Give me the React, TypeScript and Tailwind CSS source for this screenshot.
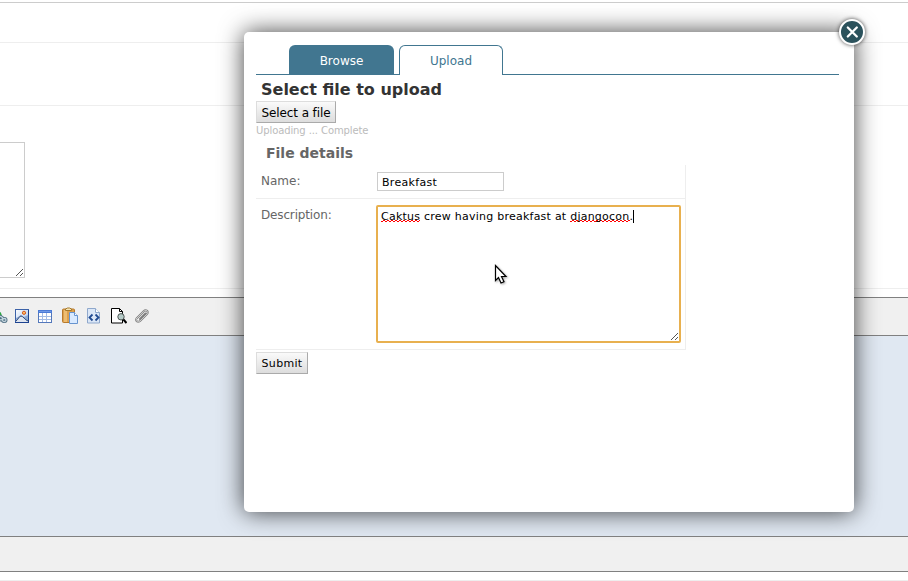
import React from "react";

function LinkIcon() {
  return (
    <svg width="16" height="16" viewBox="0 0 16 16" className="shrink-0">
      <path d="M0 1h5l4 4 1 5-4 3H0z" fill="#2c7f7a" />
      <path d="M5 2l4 3 1 4-3 1-3-3z" fill="#2fae3c" />
      <g fill="none" stroke="#4f6f82" strokeWidth="3">
        <rect x="6" y="8.500" width="4.500" height="3" rx="1.500" transform="rotate(20 8 10)" />
        <rect x="10.500" y="10.500" width="3.500" height="3" rx="1.500" />
      </g>
      <g fill="none" stroke="#c5d5df" strokeWidth="1.300">
        <rect x="6" y="8.500" width="4.500" height="3" rx="1.500" transform="rotate(20 8 10)" />
        <rect x="10.500" y="10.500" width="3.500" height="3" rx="1.500" />
      </g>
    </svg>
  );
}

function ImageIcon() {
  return (
    <svg width="16" height="16" viewBox="0 0 16 16" className="shrink-0">
      <defs>
        <linearGradient id="sky" x2="1" y2="1">
          <stop offset="0" stopColor="#fff" />
          <stop offset="1" stopColor="#a6c3ee" />
        </linearGradient>
      </defs>
      <rect x="1.500" y="1.500" width="13" height="13" fill="url(#sky)" stroke="#3c62a8" />
      <path d="M2 10l2-1 3-2 3 2 4-2v7H2z" fill="#8ea9d2" />
      <path d="M2 13c2-1 3-5 5-5s4 4 7 5v1H2z" fill="#dfe5ef" />
      <path d="M2 13c2-1 3-5 5-5s4 4 7 5" fill="none" stroke="#2c4a7e" />
      <path d="M1 14.500h14M14.500 2v13" stroke="#1d4390" />
      <circle cx="10" cy="4.800" r="1.600" fill="#ffc163" stroke="#d5541b" />
    </svg>
  );
}

function TableIcon() {
  return (
    <svg width="16" height="16" viewBox="0 0 16 16" className="shrink-0">
      <rect x="1.500" y="2.500" width="13" height="12" fill="#fff" stroke="#5478bb" />
      <path d="M1 2h14v3H1z" fill="#4a7ad6" />
      <path d="M2 3h12v1H2z" fill="#6f99e6" />
      <path d="M2 8.500h12M2 11.500h12M5.500 5v9M9.500 5v9" stroke="#a3bce5" />
    </svg>
  );
}

function PasteIcon() {
  return (
    <svg width="18" height="17" viewBox="0 0 18 17" className="shrink-0">
      <rect x="1.500" y="2" width="12" height="13.500" rx="1" fill="#dca04d" stroke="#b87a2c" />
      <path d="M3 3h3v12H3z" fill="#edbd72" />
      <path d="M4.500 3.500V2l2-1h2l2 1v1.500z" fill="#f5e5b7" stroke="#a47829" />
      <path d="M8.500 5.500h5l3 3v8h-8z" fill="#d9eaff" stroke="#6794cf" />
      <path d="M13.500 5.500v3h3" fill="#fff" stroke="#6794cf" />
    </svg>
  );
}

function SourceIcon() {
  return (
    <svg width="16" height="17" viewBox="0 0 16 17" className="shrink-0">
      <path d="M2.500 1.500h8l4 4v10.500h-12z" fill="#dbe7f7" stroke="#8fa8cc" />
      <path d="M10.500 1.500v4h4" fill="#fff" stroke="#8fa8cc" />
      <path d="M7.500 7.500l-3 3 3 3M10.500 7.500l3 3-3 3" fill="none" stroke="#204a91" strokeWidth="1.800" />
    </svg>
  );
}

function PreviewIcon() {
  return (
    <svg width="17" height="17" viewBox="0 0 17 17" className="shrink-0">
      <path d="M1.500 1.500h8l3 3v11.500h-11z" fill="#fff" stroke="#000" />
      <path d="M9.500 1.500v3h3" fill="none" stroke="#000" />
      <path d="M13 12l3.500 4" stroke="#000" strokeWidth="2" />
      <circle cx="11" cy="9.800" r="3.200" fill="#b6cbc8" stroke="#4c5553" />
    </svg>
  );
}

function ClipIcon() {
  return (
    <svg width="16" height="16" viewBox="0 0 16 16" className="shrink-0" fill="none" strokeLinecap="round" strokeLinejoin="round">
      <path d="M11.500 5.500L6 11M2.500 10.500l7-7c2.500-2.500 6 0 3.500 2.500L6 13c-2.500 2-5-.5-3.500-2.500z" stroke="#808080" strokeWidth="2" />
      <path d="M2.500 10.500l7-7c2.500-2.500 6 0 3.500 2.500L6 13c-2.500 2-5-.5-3.500-2.500z" stroke="#d2d2d2" strokeWidth=".9" />
    </svg>
  );
}

function ResizeGrip() {
  return (
    <svg width="9" height="9" viewBox="0 0 9 9" className="shrink-0" shapeRendering="crispEdges">
      <path d="M1 8L8 1M5 8l3-3" stroke="#555" />
    </svg>
  );
}

function Misspelled({ children }: { children: React.ReactNode }) {
  return (
    <span className="bg-[repeating-conic-gradient(#f00_0_25%,transparent_0_50%)] bg-[length:4px_2px] bg-[position:left_bottom_1px] bg-repeat-x">
      {children}
    </span>
  );
}

function EditorPage() {
  return (
    <div className="flex h-[581px] flex-col bg-white">
      <div className="h-[3px] shrink-0 border-b border-[#ccc]" />
      <div className="h-10 shrink-0 border-b border-[#eee]" />
      <div className="h-[63px] shrink-0 border-b border-[#eee]" />
      <div className="h-[183px] shrink-0 border-b border-[#eee] pt-9">
        <div className="flex h-[136px] w-[25px] items-end justify-end border border-l-0 border-[#ccc]">
          <ResizeGrip />
        </div>
      </div>
      <div className="h-2 shrink-0" />
      <div className="flex h-[39px] shrink-0 items-center border-y border-[#808080] bg-[#f0f0f0] pb-[2px]">
        <div className="-ml-2 flex items-center">
          <LinkIcon />
          <span className="w-1.5" />
          <ImageIcon />
          <span className="w-[7px]" />
          <TableIcon />
          <span className="w-2" />
          <PasteIcon />
          <span className="w-[6px]" />
          <SourceIcon />
          <span className="w-[9px]" />
          <PreviewIcon />
          <span className="w-[7px]" />
          <ClipIcon />
        </div>
      </div>
      <div className="h-[200px] shrink-0 bg-[#e0e8f2]" />
      <div className="h-9 shrink-0 border-y border-[#808080] bg-[#f0f0f0]" />
      <div className="h-[9px] shrink-0 border-b border-[#eee]" />
    </div>
  );
}

function FormButton({ children, className }: { children: React.ReactNode; className: string }) {
  return (
    <button
      className={
        "flex items-center justify-center whitespace-nowrap border border-t-[#ddd] border-l-[#ddd] border-r-[#aaa] border-b-[#aaa] bg-linear-to-b from-[#fafafa] to-[#ddd] text-black " +
        className
      }
    >
      {children}
    </button>
  );
}

function UploadDialog() {
  return (
    <div className="absolute top-8 left-[244px] h-[480px] w-[610px] rounded-[5px] bg-white pt-[13px] pl-3 shadow-[0_0_25px_rgba(0,0,0,0.75)]">
      <button className="absolute -top-[14px] left-[594px]">
        <svg width="28" height="28" viewBox="0 0 28 28" className="drop-shadow-[0_0_2px_rgba(0,0,0,0.7)]">
          <circle cx="14" cy="14" r="12" fill="#2b525c" stroke="#fff" strokeWidth="2" />
          <path d="M9.800 9.500l9 9M18.800 9.500l-9 9" stroke="#fff" strokeWidth="2.300" strokeLinecap="round" />
        </svg>
      </button>

      <div className="flex h-[30px] w-[583px] text-[12px] leading-[32px]">
        <div className="w-[33px] border-b border-[#417690]" />
        <div className="w-[105px] rounded-t-[6px] bg-[#417690] text-center text-white">Browse</div>
        <div className="w-[5px] border-b border-[#417690]" />
        <div className="w-[104px] rounded-t-[6px] border border-b-0 border-[#417690] text-center leading-[30px] text-[#417690]">
          Upload
        </div>
        <div className="grow border-b border-[#417690]" />
      </div>

      <h2 className="h-[26px] pl-[5px] text-[16px] leading-[29px] font-bold text-[#333]">Select file to upload</h2>
      <FormButton className="h-[22px] w-20 pt-[2px] text-[12px] tracking-[-0.1px]">Select a file</FormButton>
      <p className="h-[15px] text-[10px] leading-[15px] tracking-[-0.1px] text-[#bbb]">Uploading ... Complete</p>
      <h3 className="h-[27px] pl-[10px] text-[14px] leading-[30px] font-bold text-[#666]">File details</h3>

      <div className="w-[430px] border-r border-[#eee] text-[12px] text-[#666]">
        <div className="flex h-[34px] border-b border-[#eee] pt-[7px] pl-[5px]">
          <div className="w-[116px] leading-[18px]">Name:</div>
          <div className="h-[19px] w-[127px] border border-[#ccc] pl-1 text-[11px] leading-[19px] tracking-[0.3px] text-black">
            Breakfast
          </div>
        </div>
        <div className="flex h-[151px] border-b border-[#eee] pt-[6px] pl-[5px]">
          <div className="w-[115px] pt-[1px] leading-[18px] tracking-[-0.15px]">Description:</div>
          <div className="flex h-[138px] w-[305px] flex-col justify-between rounded-[2px] border-2 border-[#e8b04f]">
            <div className="flex items-center whitespace-pre pt-[1px] pl-[3px] text-[11px] leading-[17px] tracking-[0.24px] text-black">
              <span>
                <Misspelled>Caktus</Misspelled> crew having breakfast at <Misspelled>djangocon</Misspelled>.
              </span>
              <span className="h-[13px] w-px bg-black" />
            </div>
            <div className="flex justify-end">
              <ResizeGrip />
            </div>
          </div>
        </div>
      </div>
      <FormButton className="mt-[2px] h-[22px] w-[52px] pt-[2px] text-[11px] tracking-[0.3px]">Submit</FormButton>
    </div>
  );
}

export default function App() {
  return (
    <div className="relative h-[581px] w-[908px] overflow-hidden font-['DejaVu_Sans',sans-serif]">
      <EditorPage />
      <UploadDialog />
      <svg width="16" height="23" viewBox="0 0 16 23" className="absolute top-[264px] left-[494px] drop-shadow-[1px_1px_1px_rgba(0,0,0,0.35)]">
        <path d="M1.500 1.500v15l3-3 2.500 5.500 3-1.300-2.500-5.200h4.500z" fill="#fff" stroke="#000" strokeWidth="1.200" />
      </svg>
    </div>
  );
}
